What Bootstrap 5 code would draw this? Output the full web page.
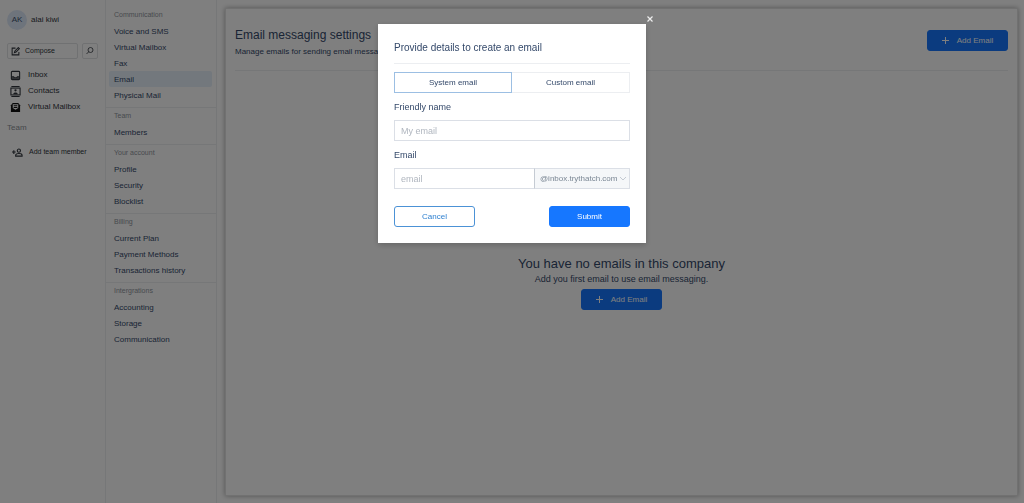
<!DOCTYPE html>
<html lang="en">
<head>
<meta charset="utf-8">
<meta name="viewport" content="width=device-width, initial-scale=1">
<title>Email messaging settings</title>
<link href="https://cdn.jsdelivr.net/npm/bootstrap@5.3.0/dist/css/bootstrap.min.css" rel="stylesheet">
<style>
  :root { --ink: #34496a; --dark: #30353c; --muted: #8f959d; --line: #eceef1; --brand: #1677ff; }
  body { font-family: "Liberation Sans", Arial, sans-serif; font-size: 8px; line-height: 16px; color: var(--ink); background: #fff; }
  a { color: inherit; text-decoration: none; }
  .btn { --bs-btn-font-size: 8px; --bs-btn-line-height: 13px; --bs-btn-padding-y: 3px; --bs-btn-border-radius: 3px; }
  .btn-primary { --bs-btn-bg: var(--brand); --bs-btn-border-color: var(--brand); }
  .btn-outline-primary { --bs-btn-color: #2f80d0; --bs-btn-border-color: #4c92d6; }
  .action-btn { width: 81px; height: 21px; }
  .sidebar { width: 105px; padding: 10px 7px; color: var(--dark); flex: none; }
  .avatar { width: 20px; height: 20px; background: #dde8f8; color: #40536e; }
  .tool-btn { height: 16px; border: 1px solid #e0e2e5; border-radius: 2px; background: #fff; color: var(--dark); padding: 0 3px; font-size: 7px; line-height: 14px; }
  .compose-btn { width: 71px; gap: 5px; }
  .tool-row { margin-top: 13px; }
  .side-links { padding-top: 8px; }
  .side-links a { display: flex; align-items: center; gap: 7px; padding-left: 3px; }
  .side-label { color: #8c9095; padding-top: 5px; }
  .invite-link { font-size: 7px; padding: 8px 0 0 5px; gap: 6px; }
  .settings-nav { width: 112px; border: solid var(--line); border-width: 0 1px; flex: none; padding-top: 7px; }
  .settings-nav section { padding: 0 4px 4px 3px; }
  .settings-nav section + section { border-top: 1px solid var(--line); }
  .settings-nav h2 { font-size: 7px; line-height: 16px; color: var(--muted); margin: 0; padding-left: 5px; font-weight: 400; }
  .settings-nav a { display: block; height: 16px; line-height: 17px; padding-left: 5px; border-radius: 2px; }
  .settings-nav a.active { background: #e7f1fb; }
  .panel { margin: 8px 6px 7px 8px; padding: 17px 9px; border: 1px solid #e2e2e2; box-shadow: 0 0 5px rgba(0,0,0,.35); }
  .panel-head { border-bottom: 1px solid var(--line); height: 45px; }
  .page-title { font-size: 12px; line-height: 18px; }
  .empty-state { padding-top: 185px; }
  .empty-title { font-size: 13px; line-height: 16px; }
  .empty-note { font-size: 9px; line-height: 14px; margin-bottom: 3px; }
  .modal { overflow: hidden; }
  .modal-dialog { margin: 24px auto; max-width: 268px; }
  .modal-content { border: 0; border-radius: 0; padding: 16px; color: var(--ink); box-shadow: 0 2px 6px rgba(0,0,0,.2); }
  .modal-backdrop { --bs-backdrop-opacity: .5; }
  .modal-close { position: absolute; top: -10px; right: -9px; width: 10px; height: 10px; padding: 0; border: 0; background: none; color: #eee; display: flex; }
  .modal-title { font-size: 10px; line-height: 15px; font-weight: 400; padding-bottom: 8px; border-bottom: 1px solid var(--line); }
  .type-tabs button { height: 21px; border: 1px solid var(--line); background: #fff; color: var(--ink); padding: 0; }
  .type-tabs button.active { border-color: #9cbfe3; }
  .form-label { font-size: 9px; line-height: 13px; margin: 0 0 6px; display: block; }
  .form-control, .form-select { font-size: 9px; line-height: 13px; height: 21px; min-height: 0; border-color: #dbdfe6; border-radius: 0; padding: 3px 6px; color: var(--ink); }
  .form-control::placeholder { color: #b0b6bf; }
  .local-part { min-width: 0; border-right: 0; }
  .domain-wrap { width: 96px; flex: none; }
  .form-select { font-size: 8px; color: #7b8794; background: #f5f7f9; border-left-color: #c5cbd3; padding: 3px 5px; }
  .select-arrow { position: absolute; right: 3px; top: 7px; pointer-events: none; }
  .form-actions { margin-top: 17px; }
  svg { flex: none; }
</style>
</head>
<body>
<div class="d-flex min-vh-100">
  <aside class="sidebar">
    <div class="d-flex align-items-center gap-1"><span class="avatar rounded-circle d-flex align-items-center justify-content-center">AK</span><span>alai kiwi</span></div>
    <div class="tool-row d-flex justify-content-between">
      <button type="button" class="tool-btn compose-btn d-flex align-items-center">
        <svg width="9" height="9" viewBox="0 0 16 16" fill="none" stroke="currentColor" stroke-width="1.800"><path d="M8 2H2v12h12V9M6 10l1-3 6-6 2 2-6 6z"/></svg><span>Compose</span></button>
      <button type="button" class="tool-btn d-flex align-items-center" aria-label="Search"><svg width="8" height="8" viewBox="0 0 16 16" fill="none" stroke="currentColor" stroke-width="1.600"><circle cx="9" cy="6" r="5"/><path d="M5.500 9.500L1 14"/></svg></button>
    </div>
    <nav class="side-links">
      <a href="#"><svg width="11" height="11" viewBox="0 0 24 24" fill="none" stroke="currentColor" stroke-width="2.400"><rect x="3" y="3" width="18" height="18" rx="2"/><path d="M3 15h5c1 3 7 3 8 0h5M3 18h18"/></svg>Inbox</a>
      <a href="#"><svg width="11" height="11" viewBox="0 0 24 24" fill="none" stroke="currentColor" stroke-width="2.400"><path d="M3 1h18M3 23h18"/><rect x="2" y="4.500" width="20" height="15"/><circle cx="12" cy="9.500" r="2.500" fill="currentColor" stroke="none"/><path d="M7 18c0-5 10-5 10 0z" fill="currentColor" stroke="none"/></svg>Contacts</a>
      <a href="#"><svg width="11" height="11" viewBox="0 0 24 24"><path d="M6 2h12l4 5v15H2V7z" fill="#111"/><path d="M6 5h12v8l-6 4-6-4z" fill="#fff"/><path d="M8 7h8v2H8zM8 11h8v2H8z" fill="#111"/></svg>Virtual Mailbox</a>
    </nav>
    <div class="side-label">Team</div>
    <a href="#" class="invite-link d-flex align-items-center"><svg width="11" height="11" viewBox="0 0 24 24" fill="none" stroke="currentColor" stroke-width="2.400"><path d="M4 7v8M0 11h8"/><circle cx="15" cy="8" r="3.500"/><path d="M8 20v-2c0-5 14-5 14 0v2z"/></svg>Add team member</a>
  </aside>
  <nav class="settings-nav" aria-label="Settings">
    <section><h2>Communication</h2><a href="#">Voice and SMS</a><a href="#">Virtual Mailbox</a><a href="#">Fax</a><a href="#" class="active">Email</a><a href="#">Physical Mail</a></section>
    <section><h2>Team</h2><a href="#">Members</a></section>
    <section><h2>Your account</h2><a href="#">Profile</a><a href="#">Security</a><a href="#">Blocklist</a></section>
    <section><h2>Billing</h2><a href="#">Current Plan</a><a href="#">Payment Methods</a><a href="#">Transactions history</a></section>
    <section><h2>Intergrations</h2><a href="#">Accounting</a><a href="#">Storage</a><a href="#">Communication</a></section>
  </nav>
  <main class="panel flex-fill">
    <header class="panel-head d-flex justify-content-between">
      <div><h1 class="page-title fw-normal m-0">Email messaging settings</h1><div>Manage emails for sending email messages</div></div>
      <button type="button" class="btn btn-primary action-btn mt-1 d-flex align-items-center justify-content-center"><svg class="me-2" width="7" height="7" viewBox="0 0 7 7" stroke="currentColor"><path d="M3.500 0v7M0 3.500h7"/></svg>Add Email</button>
    </header>
    <div class="empty-state d-flex flex-column align-items-center">
      <h2 class="empty-title fw-normal m-0">You have no emails in this company</h2>
      <div class="empty-note">Add you first email to use email messaging.</div>
      <button type="button" class="btn btn-primary action-btn d-flex align-items-center justify-content-center"><svg class="me-2" width="7" height="7" viewBox="0 0 7 7" stroke="currentColor"><path d="M3.500 0v7M0 3.500h7"/></svg>Add Email</button>
    </div>
  </main>
</div>

<div class="modal-backdrop show"></div>
<div class="modal show d-block" role="dialog" aria-modal="true" aria-labelledby="dialogTitle">
  <div class="modal-dialog">
    <form class="modal-content">
      <button type="button" class="modal-close" aria-label="Close"><svg width="10" height="10" viewBox="0 0 10 10" stroke="currentColor" stroke-width="1.200"><path d="M2.500 2.500l5 5M7.500 2.500l-5 5"/></svg></button>
      <h2 class="modal-title mb-2" id="dialogTitle">Provide details to create an email</h2>
      <div class="type-tabs d-flex mb-2"><button type="button" class="active w-50">System email</button><button type="button" class="w-50 border-start-0">Custom email</button></div>
      <label class="form-label" for="friendly">Friendly name</label>
      <input class="form-control mb-2" id="friendly" type="text" placeholder="My email">
      <label class="form-label" for="address">Email</label>
      <div class="d-flex">
        <input class="form-control local-part flex-fill w-auto" id="address" type="text" placeholder="email">
        <div class="domain-wrap position-relative">
          <select class="form-select" aria-label="Email domain"><option>@inbox.trythatch.com</option></select>
          <svg class="select-arrow" width="8" height="8" viewBox="0 0 8 8" fill="none" stroke="#c3c9d1"><path d="M1 2l3 3 3-3"/></svg>
        </div>
      </div>
      <div class="form-actions d-flex justify-content-between"><button type="button" class="btn btn-outline-primary action-btn">Cancel</button><button type="submit" class="btn btn-primary action-btn">Submit</button></div>
    </form>
  </div>
</div>
<script src="https://cdn.jsdelivr.net/npm/bootstrap@5.3.0/dist/js/bootstrap.bundle.min.js"></script>
</body>
</html>
